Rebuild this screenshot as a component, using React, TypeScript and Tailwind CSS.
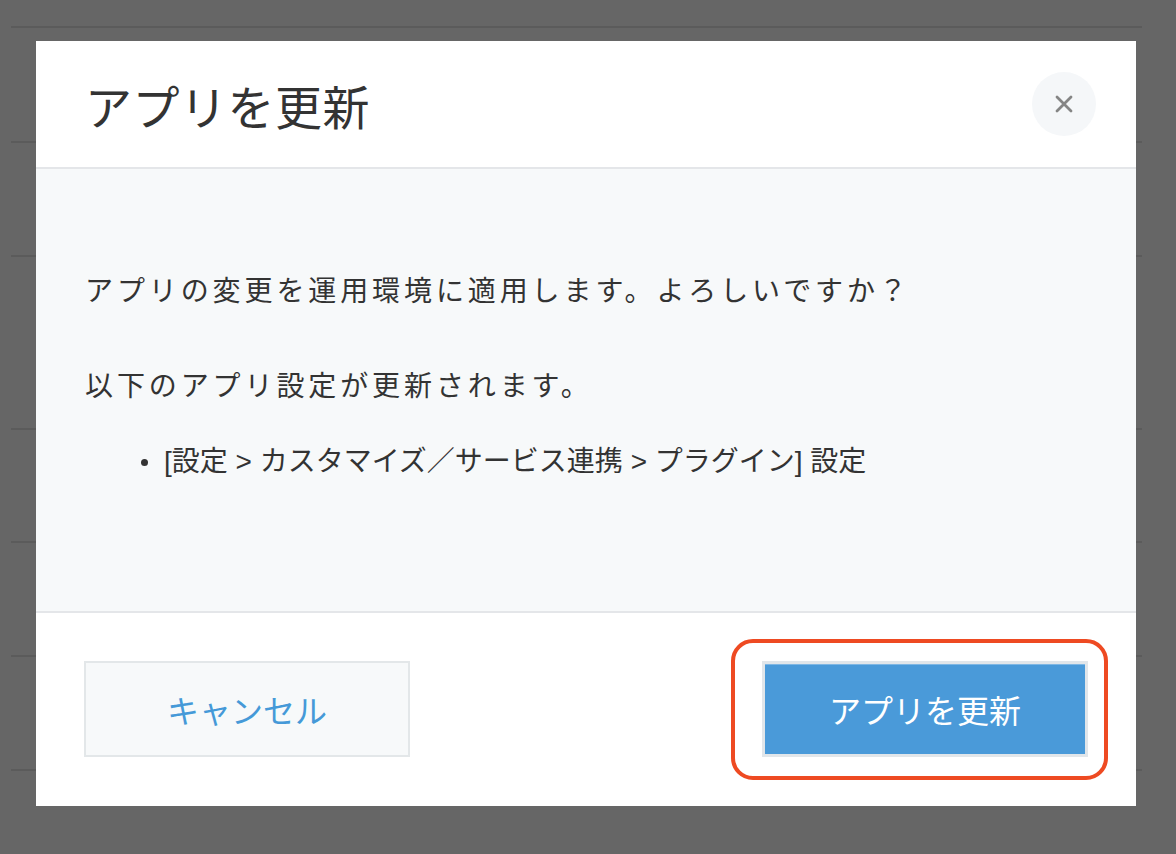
import React from "react";

const font = { fontFamily: '"Noto Sans CJK JP", "Noto Sans", sans-serif' };

function BackgroundRows() {
  const rows = ["h-[28px]", "h-[115px]", "h-[114px]", "h-[173px]", "h-[113px]", "h-[114px]", "h-[114px]"];
  return (
    <div className="ml-[11px] w-[1131px] flex flex-col">
      {rows.map((h, i) => (
        <div key={i} className={`${h} border-b-2 border-[#5b5b5b]`} />
      ))}
    </div>
  );
}

export default function App() {
  return (
    <div className="relative w-[1176px] h-[854px] bg-[#666666] overflow-hidden" style={font}>
      <BackgroundRows />

      <div className="absolute left-[36px] top-[41px] w-[1100px] h-[765px] bg-white flex flex-col">
        {/* Header */}
        <div className="h-[128px] shrink-0 border-b-2 border-[#e4e6e9] flex items-center justify-between pl-[49px] pr-[40px]">
          <h1 className="text-[47px] leading-none text-[#333333] font-normal tracking-[0.5px]">アプリを更新</h1>
          <button className="w-[64px] h-[64px] rounded-full bg-[#f5f7f9] flex items-center justify-center">
            <svg width="18" height="18" viewBox="0 0 18 18">
              <path d="M2 2 L16 16 M16 2 L2 16" stroke="#858585" strokeWidth="2.8" strokeLinecap="round" />
            </svg>
          </button>
        </div>

        {/* Body */}
        <div className="h-[444px] shrink-0 bg-[#f7f9fa] border-b-2 border-[#e4e6e9] pl-[49px] pt-[100px] text-[#333333]">
          <p className="text-[28px] leading-[40px] tracking-[3.9px]">アプリの変更を運用環境に適用します。よろしいですか？</p>
          <p className="mt-[55px] text-[28px] leading-[40px] tracking-[3.9px]">以下のアプリ設定が更新されます。</p>
          <ul className="mt-[38px]">
            <li className="flex items-center text-[28px] leading-[40px]">
              <span className="ml-[56px] mr-[16px] w-[7px] h-[7px] rounded-full bg-[#333333]" />
              <span style={{ fontFamily: '"Liberation Sans", "Noto Sans CJK JP", sans-serif' }}>
                [設定 &gt; カスタマイズ／サービス連携 &gt; プラグイン] 設定
              </span>
            </li>
          </ul>
        </div>

        {/* Footer */}
        <div className="flex-1 flex items-start justify-between px-[48px] pt-[48px]">
          <button className="w-[326px] h-[96px] border-2 border-[#e3e7e9] bg-[#f7f9fa] text-[#4599d8] text-[32px] leading-none flex items-center justify-center">
            キャンセル
          </button>
          <div className="relative">
            <button className="w-[326px] h-[96px] border-[3px] border-[#e1e6ea] bg-[#4a9ad9] text-white text-[32px] leading-none flex items-center justify-center shadow-[inset_0_1px_0_#7fb7e4]">
              アプリを更新
            </button>
            <div className="absolute -left-[31px] -right-[20px] -top-[22px] -bottom-[23px] border-[4px] border-[#ee4a22] rounded-[22px] pointer-events-none" />
          </div>
        </div>
      </div>
    </div>
  );
}
